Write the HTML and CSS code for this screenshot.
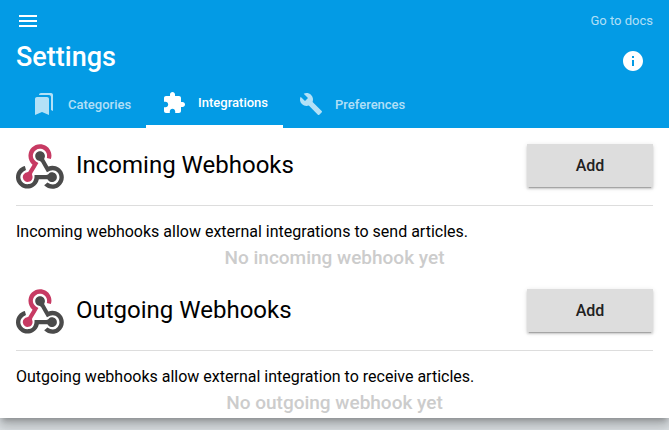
FILE: index.html
```html
<!DOCTYPE html>
<html lang="en">
<head>
<meta charset="utf-8">
<meta name="viewport" content="width=device-width, initial-scale=1">
<title>Settings</title>
<link rel="stylesheet" href="styles.css">
</head>
<body>
<svg class="sprite" aria-hidden="true">
  <symbol id="webhook" viewBox="0 0 256 239">
    <path fill="#C73A63" d="M119.54 100.503c-10.61 17.836-20.775 35.108-31.152 52.25-2.665 4.401-3.984 7.986-1.855 13.58 5.878 15.454-2.414 30.493-17.998 34.575-14.697 3.851-29.016-5.808-31.932-21.543-2.584-13.927 8.224-27.58 23.58-29.757 1.286-.184 2.6-.205 4.762-.367l23.358-39.168C73.612 95.465 64.868 78.39 66.803 57.23c1.368-14.957 7.25-27.883 18-38.477 20.59-20.288 52.002-23.573 76.246-8.001 23.284 14.958 33.948 44.094 24.858 69.031-6.854-1.858-13.756-3.732-21.343-5.79 2.854-13.865.743-26.315-8.608-36.981-6.178-7.042-14.106-10.733-23.12-12.093-18.072-2.73-35.815 8.88-41.08 26.618-5.976 20.13 3.069 36.575 27.784 48.967z"/>
    <path fill="#4B4B4B" d="M149.841 79.41c7.475 13.187 15.065 26.573 22.587 39.836 38.02-11.763 66.686 9.284 76.97 31.817 12.422 27.219 3.93 59.457-20.465 76.25-25.04 17.238-56.707 14.292-78.892-7.851 5.654-4.733 11.336-9.487 17.407-14.566 21.912 14.192 41.077 13.524 55.305-3.282 12.133-14.337 11.87-35.714-.615-49.75-14.408-16.197-33.707-16.691-57.035-1.143-9.677-17.168-19.522-34.199-28.893-51.491-3.16-5.828-6.648-9.21-13.77-10.443-11.893-2.062-19.571-12.275-20.032-23.717-.453-11.316 6.214-21.545 16.634-25.53 10.322-3.949 22.435-.762 29.378 8.014 5.674 7.17 7.477 15.24 4.491 24.083-.83 2.466-1.905 4.852-3.07 7.774z"/>
    <path fill="#4A4A4A" d="M167.707 187.21h-45.77c-4.387 18.044-13.863 32.612-30.19 41.876-12.693 7.2-26.373 9.641-40.933 7.29-26.808-4.323-48.728-28.456-50.658-55.63-2.184-30.784 18.975-58.147 47.178-64.293 1.947 7.071 3.914 14.21 5.862 21.264-25.876 13.202-34.832 29.836-27.59 50.636 6.375 18.304 24.484 28.337 44.147 24.457 20.08-3.962 30.204-20.65 28.968-47.432 19.036 0 38.088-.197 57.126.097 7.434.117 13.173-.654 18.773-7.208 9.22-10.784 26.191-9.811 36.121.374 10.148 10.409 9.662 27.157-1.077 37.127-10.361 9.62-26.73 9.106-36.424-1.26-1.992-2.136-3.562-4.673-5.533-7.298z"/>
  </symbol>
</svg>
<div class="page">
  <header class="header">
    <div class="topbar">
      <button class="icon-button" type="button" aria-label="Menu">
        <svg class="icon" viewBox="0 0 24 24"><path d="M3 18h18v-2H3v2zm0-5h18v-2H3v2zm0-7v2h18V6H3z"/></svg>
      </button>
      <a class="docs" href="#docs">Go to docs</a>
    </div>
    <div class="titlebar">
      <h1 class="title">Settings</h1>
      <button class="icon-button" type="button" aria-label="Information">
        <svg class="icon" viewBox="0 0 24 24"><path d="M12 2C6.48 2 2 6.48 2 12s4.480 10 10 10 10-4.480 10-10S17.520 2 12 2zm1 15h-2v-6h2v6zm0-8h-2V7h2v2z"/></svg>
      </button>
    </div>
    <nav class="tabs">
      <a class="tab" href="#categories">
        <svg class="icon" viewBox="0 0 24 24"><path d="M19 18l2 1V3c0-1.100-.9-2-2-2H8.990C7.890 1 7 1.900 7 3h10c1.100 0 2 .9 2 2v13zM15 5H5c-1.100 0-2 .9-2 2v16l7-3 7 3V7c0-1.100-.9-2-2-2z"/></svg>
        Categories
      </a>
      <a class="tab tab-active" href="#integrations" aria-current="page">
        <svg class="icon" viewBox="0 0 24 24"><path d="M20.500 11H19V7c0-1.100-.9-2-2-2h-4V3.500C13 2.120 11.880 1 10.500 1S8 2.120 8 3.500V5H4c-1.100 0-1.990.9-1.990 2v3.800H3.500c1.490 0 2.700 1.210 2.700 2.700s-1.210 2.700-2.700 2.700H2V20c0 1.100.9 2 2 2h3.800v-1.500c0-1.490 1.210-2.700 2.700-2.700 1.490 0 2.700 1.210 2.700 2.700V22H17c1.100 0 2-.9 2-2v-4h1.500c1.380 0 2.500-1.120 2.500-2.500S21.880 11 20.500 11z"/></svg>
        Integrations
      </a>
      <a class="tab" href="#preferences">
        <svg class="icon" viewBox="0 0 24 24"><path d="M22.700 19l-9.100-9.100c.9-2.300.4-5-1.500-6.900-2-2-5-2.400-7.400-1.300L9 6 6 9 1.600 4.700C.4 7.100.9 10.100 2.900 12.100c1.900 1.900 4.600 2.400 6.900 1.500l9.100 9.100c.4.4 1 .4 1.400 0l2.300-2.300c.5-.4.5-1.100.1-1.400z"/></svg>
        Preferences
      </a>
    </nav>
  </header>
  <main>
    <section class="section">
      <div class="section-head">
        <svg class="logo" aria-hidden="true"><use href="#webhook"/></svg>
        <h2 class="section-title">Incoming Webhooks</h2>
        <button class="add" type="button">Add</button>
      </div>
      <p class="text">Incoming webhooks allow external integrations to send articles.</p>
      <p class="empty">No incoming webhook yet</p>
    </section>
    <section class="section">
      <div class="section-head">
        <svg class="logo" aria-hidden="true"><use href="#webhook"/></svg>
        <h2 class="section-title">Outgoing Webhooks</h2>
        <button class="add" type="button">Add</button>
      </div>
      <p class="text">Outgoing webhooks allow external integration to receive articles.</p>
      <p class="empty">No outgoing webhook yet</p>
    </section>
  </main>
</div>
</body>
</html>
```
FILE: styles.css
```css
* {
  box-sizing: border-box;
}

body {
  min-height: 100vh;
  margin: 0;
  background: #dee3e6;
  color: #000;
  font-family: Roboto, sans-serif;
  font-size: 16px;
}

h1, h2, p {
  margin: 0;
}

.sprite {
  position: absolute;
  width: 0;
  height: 0;
}

.page {
  background: #fff;
  box-shadow:
    0 5px 5px -3px rgba(0, 0, 0, 0.2),
    0 8px 10px 1px rgba(0, 0, 0, 0.14),
    0 3px 14px 2px rgba(0, 0, 0, 0.12);
}

.header {
  background: #039be5;
  color: #fff;
}

.topbar,
.titlebar {
  display: flex;
  align-items: center;
  justify-content: space-between;
  padding: 0 16px;
}

.topbar {
  height: 41px;
}

.titlebar {
  height: 39px;
  padding-right: 24px;
}

.icon {
  display: block;
  width: 24px;
  height: 24px;
  flex: none;
  fill: currentColor;
}

.icon-button {
  padding: 0;
  border: 0;
  background: none;
  color: inherit;
}

.docs {
  color: rgba(255, 255, 255, 0.7);
  font-size: 13px;
  text-decoration: none;
}

.title {
  align-self: flex-start;
  font-size: 27px;
  line-height: 32px;
  font-weight: 500;
}

.tabs {
  display: flex;
  height: 48px;
  padding-left: 16px;
}

.tab {
  display: flex;
  align-items: center;
  gap: 12px;
  padding: 0 15px 0 16px;
  color: rgba(255, 255, 255, 0.7);
  font-size: 13px;
  font-weight: 500;
  text-decoration: none;
}

.tab-active {
  border-bottom: 3px solid #fff;
  color: #fff;
}

.section {
  padding: 16px 16px 0;
}

.section-head {
  display: flex;
  align-items: flex-start;
  gap: 12px;
  padding-bottom: 16px;
  border-bottom: 1px solid #ddd;
}

.logo {
  width: 48px;
  height: 45px;
  flex: none;
}

.section-title {
  flex: 1;
  font-size: 24px;
  line-height: 42px;
  font-weight: 400;
}

.add {
  min-width: 126px;
  height: 43px;
  padding: 0 16px;
  border: 0;
  background: #ddd;
  box-shadow:
    0 3px 1px -2px rgba(0, 0, 0, 0.2),
    0 2px 2px rgba(0, 0, 0, 0.14),
    0 1px 5px rgba(0, 0, 0, 0.12);
  color: #212121;
  font: 500 16px Roboto, sans-serif;
}

.text {
  margin-top: 16px;
  line-height: 19px;
}

.empty {
  padding-top: 2px;
  color: #ccc;
  font-size: 19px;
  line-height: 30px;
  font-weight: 500;
  text-align: center;
}
```
